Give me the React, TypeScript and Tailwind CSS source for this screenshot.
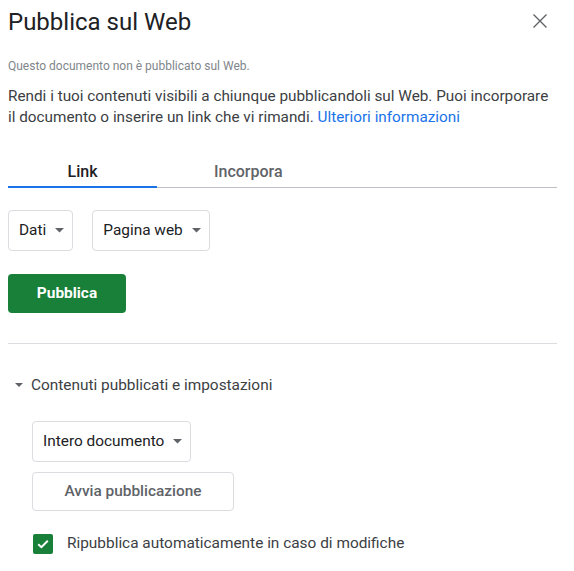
import React from "react";

const Caret = () => (
  <svg width="9" height="5" viewBox="0 0 9 5" className="shrink-0">
    <path d="M0 0 L9 0 L4.5 4.5 Z" fill="#5f6368" />
  </svg>
);

function Select({ label, className = "" }: { label: string; className?: string }) {
  return (
    <div
      className={`flex h-[41px] items-center gap-[9px] rounded-[4px] border border-[#dadce0] pl-[10px] pr-[8px] text-[15.4px] text-[#202124] ${className}`}
    >
      <span>{label}</span>
      <Caret />
    </div>
  );
}

export default function App() {
  return (
    <div
      className="h-[571px] w-[574px] bg-white pl-2 pr-[17px] text-[#3c4043]"
      style={{ fontFamily: "Roboto, 'Noto Sans', sans-serif" }}
    >
      <div className="flex items-start justify-between pt-[6px]">
        <h1 className="text-[24px] leading-[32px] text-[#202124]">Pubblica sul Web</h1>
        <button className="mr-[5px] mt-[3px] flex h-6 w-6 items-center justify-center">
          <svg width="24" height="24" viewBox="0 0 24 24">
            <path d="M5.5 5.5 L18.5 18.5 M18.5 5.5 L5.5 18.5" stroke="#5f6368" strokeWidth="1.4" fill="none" />
          </svg>
        </button>
      </div>

      <p className="mt-[20px] text-[12px] leading-[16px] text-[#80868b]">
        Questo documento non è pubblicato sul Web.
      </p>

      <p className="mt-[12px] text-[15.3px] leading-[21px] text-[#3c4043]">
        Rendi i tuoi contenuti visibili a chiunque pubblicandoli sul Web. Puoi incorporare il documento o
        inserire un link che vi rimandi. <span className="text-[#1a73e8]">Ulteriori informazioni</span>
      </p>

      <div className="mt-[33px] flex border-b border-[#bdc1c6]">
        <div className="relative w-[149px] pb-[4px] text-center text-[16px] font-medium leading-[22px] text-[#202124]">
          Link
          <div className="absolute bottom-[-1px] left-0 h-[2px] w-full bg-[#1a73e8]" />
        </div>
        <div className="pb-[4px] pl-[57px] text-[16px] font-medium leading-[22px] text-[#5f6368]">Incorpora</div>
      </div>

      <div className="mt-[22px] flex gap-[19px]">
        <Select label="Dati" />
        <Select label="Pagina web" />
      </div>

      <button className="mt-[23px] flex h-[39px] w-[118px] items-center justify-center rounded-[4px] bg-[#188038] text-[15.4px] font-bold text-white">
        Pubblica
      </button>

      <div className="mt-[30px] h-px bg-[#dadce0]" />

      <div className="mt-[30px] flex items-center gap-[8px] pl-[7px] text-[15.4px] leading-[22px] text-[#3c4043]">
        <svg width="8" height="4" viewBox="0 0 8 4">
          <path d="M0 0 L8 0 L4 4 Z" fill="#5f6368" />
        </svg>
        <span>Contenuti pubblicati e impostazioni</span>
      </div>

      <div className="ml-[24px] mt-[25px] flex flex-col items-start gap-[10px]">
        <Select label="Intero documento" className="h-[40px]" />
        <button className="flex h-[39px] w-[202px] items-center justify-center rounded-[4px] border border-[#dadce0] text-[15.4px] font-medium text-[#5f6368]">
          Avvia pubblicazione
        </button>
        <div className="mt-[11px] flex items-center gap-[14px]">
          <div className="ml-[1px] flex h-[20px] w-[20px] items-center justify-center rounded-[2px] bg-[#188038]">
            <svg width="14" height="14" viewBox="0 0 14 14">
              <path d="M2.2 7.2 L5.4 10.2 L11.8 3.8" stroke="white" strokeWidth="2" fill="none" />
            </svg>
          </div>
          <span className="text-[15.4px] text-[#3c4043]">Ripubblica automaticamente in caso di modifiche</span>
        </div>
      </div>
    </div>
  );
}
